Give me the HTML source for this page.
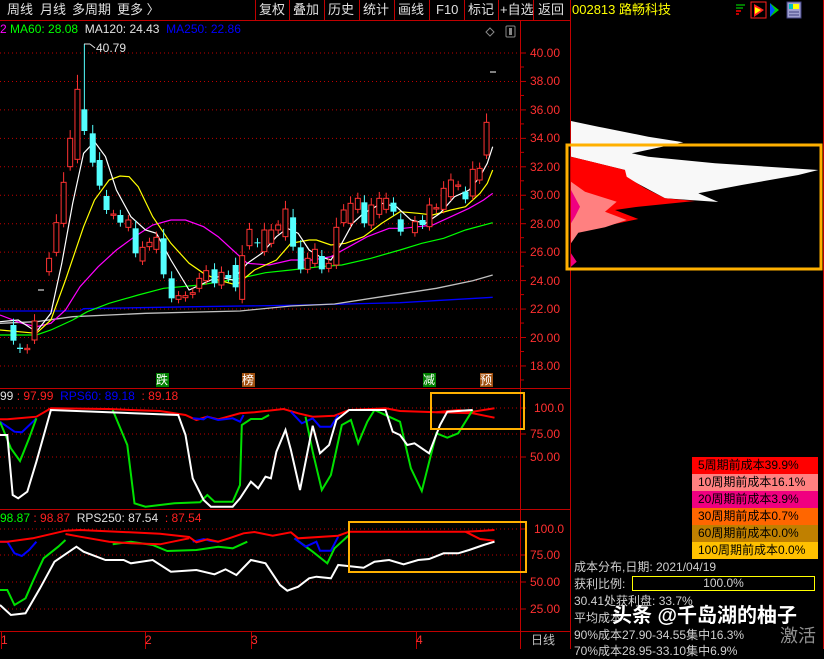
<!DOCTYPE html>
<html><head><meta charset="utf-8">
<style>
body{margin:0;background:#000;width:824px;height:649px;overflow:hidden;position:relative;font-family:"Liberation Sans","Noto Sans CJK SC",sans-serif;}
.t{position:absolute;white-space:nowrap;font-size:13px;line-height:16px;}
svg{position:absolute;left:0;top:0}
.leg div{height:17px;font-size:12px;line-height:17px;color:#000;padding-left:6px}
</style></head><body>
<svg id="s" width="824" height="649" viewBox="0 0 824 649"></svg>
<div class="t" style="left:7px;top:2px;color:#e0e0e0">周线</div>
<div class="t" style="left:40px;top:2px;color:#e0e0e0">月线</div>
<div class="t" style="left:72px;top:2px;color:#e0e0e0">多周期</div>
<div class="t" style="left:117px;top:2px;color:#e0e0e0">更多 〉</div>
<div class="t" style="left:259px;top:2px;color:#e0e0e0">复权</div>
<div class="t" style="left:293px;top:2px;color:#e0e0e0">叠加</div>
<div class="t" style="left:328px;top:2px;color:#e0e0e0">历史</div>
<div class="t" style="left:363px;top:2px;color:#e0e0e0">统计</div>
<div class="t" style="left:398px;top:2px;color:#e0e0e0">画线</div>
<div class="t" style="left:436px;top:2px;color:#e0e0e0">F10</div>
<div class="t" style="left:468px;top:2px;color:#e0e0e0">标记</div>
<div class="t" style="left:500px;top:2px;color:#e0e0e0">+自选</div>
<div class="t" style="left:538px;top:2px;color:#e0e0e0">返回</div>
<div class="t" style="left:572px;top:2px;color:#ffff00">002813 路畅科技</div>
<div class="t" style="left:0;top:21px;font-size:12px"><span style="color:#ff00ff">2</span> <span style="color:#00ff00">MA60: 28.08</span> <span style="color:#e0e0e0">&nbsp;MA120: 24.43</span> <span style="color:#0000ff">&nbsp;MA250: 22.86</span></div>
<div class="t" style="left:96px;top:40px;font-size:12px;color:#e0e0e0">40.79</div>
<div class="t" style="left:0;top:388px;font-size:12px"><span style="color:#e0e0e0">99</span> <span style="color:#ff2020">: 97.99</span> <span style="color:#0000ff">&nbsp;RPS60: 89.18</span> <span style="color:#ff2020">&nbsp;: 89.18</span></div>
<div class="t" style="left:0;top:510px;font-size:12px"><span style="color:#00ff00">98.87</span> <span style="color:#ff2020">: 98.87</span> <span style="color:#e0e0e0">&nbsp;RPS250: 87.54</span> <span style="color:#ff2020">&nbsp;: 87.54</span></div>
<div id="ax"></div>
<div class="t" style="left:156px;top:373px;width:13px;height:14px;background:#008000;color:#fff;font-size:12px;line-height:14px">跌</div>
<div class="t" style="left:242px;top:373px;width:13px;height:14px;background:#a05010;color:#fff;font-size:12px;line-height:14px">榜</div>
<div class="t" style="left:423px;top:373px;width:13px;height:14px;background:#008000;color:#fff;font-size:12px;line-height:14px">减</div>
<div class="t" style="left:480px;top:373px;width:13px;height:14px;background:#a05010;color:#fff;font-size:12px;line-height:14px">预</div>
<div class="t" style="left:1px;top:632px;color:#ff3030;font-size:12px">1</div>
<div class="t" style="left:145px;top:632px;color:#ff3030;font-size:12px">2</div>
<div class="t" style="left:251px;top:632px;color:#ff3030;font-size:12px">3</div>
<div class="t" style="left:416px;top:632px;color:#ff3030;font-size:12px">4</div>
<div class="t" style="left:531px;top:632px;color:#c0c0c0;font-size:12px">日线</div>
<div class="leg" style="position:absolute;left:692px;top:457px;width:126px">
<div style="background:#ff0000">5周期前成本39.9%</div>
<div style="background:#ff8080">10周期前成本16.1%</div>
<div style="background:#f00080">20周期前成本3.9%</div>
<div style="background:#ff6600">30周期前成本0.7%</div>
<div style="background:#c08000">60周期前成本0.0%</div>
<div style="background:#ffc000">100周期前成本0.0%</div>
</div>
<div class="t" style="left:574px;top:559px;color:#d0d0d0;font-size:12px">成本分布,日期: 2021/04/19</div>
<div class="t" style="left:574px;top:576px;color:#d0d0d0;font-size:12px">获利比例:</div>
<div class="t" style="left:632px;top:576px;width:181px;height:13px;border:1px solid #ffff00;color:#d0d0d0;font-size:12px;line-height:13px;text-align:center">100.0%</div>
<div class="t" style="left:574px;top:593px;color:#d0d0d0;font-size:12px">30.41处获利盘: 33.7%</div>
<div class="t" style="left:574px;top:610px;color:#d0d0d0;font-size:12px">平均成本</div>
<div class="t" style="left:612px;top:604px;color:#fff;font-size:20px;line-height:24px;font-weight:bold">头条 @千岛湖的柚子</div>
<div class="t" style="left:574px;top:627px;color:#d0d0d0;font-size:12px">90%成本27.90-34.55集中16.3%</div>
<div class="t" style="left:574px;top:643px;color:#d0d0d0;font-size:12px">70%成本28.95-33.10集中6.9%</div>
<div class="t" style="left:780px;top:625px;color:#909090;font-size:18px;line-height:22px">激活</div>
<script>
var S=document.getElementById('s'),h='';
function L(x1,y1,x2,y2,c,w,d){h+='<line x1="'+x1+'" y1="'+y1+'" x2="'+x2+'" y2="'+y2+'" stroke="'+c+'" stroke-width="'+(w||1)+'"'+(d?' stroke-dasharray="'+d+'"':'')+'/>';}
function P(pts,c,w,tr){var s=pts.map(function(p){return tr(p[0],p[1]).join(',')}).join(' ');h+='<polyline points="'+s+'" fill="none" stroke="'+c+'" stroke-width="'+(w||1)+'"/>';}
function M(x,y){return [(x/2.75).toFixed(1),(30+y/3).toFixed(1)];}
function R(x,y){return [(x/2.75).toFixed(1),(385+y/3).toFixed(1)];}
// frame
L(0,20.5,570,20.5,'#c00000');
[255,289,324,359,394,429,464,498,533].forEach(function(x){L(x+.5,0,x+.5,20,'#c00000')});
L(570.5,0,570.5,649,'#c00000');L(823.5,0,823.5,649,'#c00000');
L(520.5,20,520.5,649,'#c00000');
L(0,388.5,570,388.5,'#c00000');L(0,509.5,570,509.5,'#c00000');L(0,631.5,570,631.5,'#c00000');
[1,145,251,416].forEach(function(x){L(x+.5,631,x+.5,649,'#c00000')});
// main grid
var ax='';
for(var i=0;i<12;i++){var p=40-2*i,y=53+i*28.45;L(0,y,518,y,'#c00000',1,'1,3');L(520,y,526,y,'#c00000');ax+='<div class="t" style="left:530px;top:'+(y-8)+'px;color:#ff3030;font-size:12px">'+p.toFixed(2)+'</div>';L(520,y+14,524,y+14,'#c00000');}
[[408,'100.0'],[434,'75.00'],[457,'50.00'],[529,'100.0'],[555,'75.00'],[582,'50.00'],[609,'25.00']].forEach(function(a){if(a[1]!='100.0'||1){} L(0,a[0],518,a[0],'#c00000',1,'1,3');L(520,a[0],526,a[0],'#c00000');ax+='<div class="t" style="left:'+(a[1]=='100.0'?534:530)+'px;top:'+(a[0]-8)+'px;color:#ff3030;font-size:12px">'+a[1]+'</div>';});
document.getElementById('ax').innerHTML=ax;
// MAs
var T=M;
P([[0,843],[220,843],[230,836],[380,833],[540,830],[800,826],[1100,818],[1355,802]],'#0000ff',1.3,T);
P([[0,880],[100,875],[200,860],[400,850],[660,843],[800,828],[920,822],[1050,800],[1200,775],[1300,752],[1355,735]],'#c0c0c0',1.3,T);
P([[0,915],[100,915],[140,900],[200,870],[240,845],[300,820],[380,795],[450,775],[550,765],[660,745],[730,728],[800,720],[880,710],[940,705],[1020,685],[1100,660],[1160,640],[1220,625],[1280,600],[1355,578]],'#00ff00',1.2,T);
P([[0,855],[60,880],[100,890],[140,880],[180,840],[220,770],[270,710],[320,660],[370,620],[420,585],[470,570],[510,570],[560,590],[600,620],[640,660],[680,700],[740,705],[800,690],[860,690],[910,680],[960,650],[1010,620],[1070,595],[1110,595],[1150,590],[1190,585],[1240,560],[1290,535],[1330,510],[1355,490]],'#ff00ff',1.2,T);
P([[0,900],[100,910],[140,870],[180,750],[230,590],[260,510],[300,450],[330,438],[355,440],[380,470],[420,560],[470,640],[520,700],[560,730],[600,750],[650,765],[700,720],[760,690],[800,640],[850,630],[870,630],[910,645],[950,640],[1000,620],[1050,580],[1100,545],[1150,550],[1190,555],[1240,540],[1280,530],[1320,490],[1340,460],[1355,420]],'#ffff00',1.2,T);
P([[0,875],[50,870],[100,905],[140,850],[170,700],[200,520],[230,370],[260,335],[290,380],[320,480],[360,560],[400,600],[430,610],[470,690],[520,780],[560,760],[600,740],[640,750],[680,700],[720,670],[760,620],[790,595],[820,610],[850,660],[880,680],[910,690],[940,640],[970,580],[1000,550],[1050,520],[1090,530],[1130,570],[1170,580],[1210,550],[1250,500],[1290,480],[1320,440],[1340,400],[1355,350]],'#ffffff',1.2,T);
// candles [zx,top,bottom,color]
var C=[[37,885,932,'c'],[55,953,957,'c'],[75,955,959,'r'],[95,873,930,'r'],[135,685,725,'r'],[155,578,667,'r'],[175,457,580,'r'],[193,325,410,'r'],[213,178,388,'r'],[232,238,303,'c'],[255,310,398,'c'],[274,390,467,'c'],[293,498,540,'c'],[312,552,556,'r'],[331,555,578,'c'],[353,570,592,'r'],[373,595,670,'c'],[392,652,693,'r'],[411,637,650,'r'],[430,622,658,'r'],[450,625,733,'c'],[472,745,805,'c'],[491,797,808,'r'],[510,797,803,'r'],[530,788,793,'r'],[548,745,775,'r'],[567,722,752,'r'],[590,718,760,'c'],[609,727,765,'r'],[628,735,745,'c'],[648,705,772,'c'],[666,677,808,'r'],[686,598,647,'r'],[708,637,640,'c'],[727,600,665,'r'],[746,600,640,'r'],[765,585,600,'r'],[785,537,620,'r'],[806,562,650,'c'],[827,652,718,'c'],[846,685,718,'r'],[866,658,700,'r'],[885,678,718,'c'],[904,700,715,'r'],[925,592,705,'r'],[945,540,578,'r'],[964,520,580,'r'],[984,505,538,'r'],[1002,517,580,'c'],[1021,525,585,'r'],[1043,505,553,'r'],[1062,505,538,'r'],[1082,518,545,'c'],[1102,568,605,'c'],[1141,575,608,'r'],[1162,570,585,'c'],[1181,525,590,'r'],[1200,533,537,'r'],[1220,475,538,'r'],[1240,450,500,'r'],[1260,465,469,'r'],[1280,485,508,'c'],[1300,418,498,'r'],[1319,415,450,'r'],[1338,277,375,'r']];
C.forEach(function(c){var x=c[0]/2.75,t=30+c[1]/3,b=30+c[2]/3,col=c[3]=='r'?'#ff3232':'#54ffff';
var wt=t-4-(c[2]-c[1])/20,wb=b+4;if(c[0]==232)wt=44;
L(x,wt,x,wb,col);
if(c[3]=='r')h+='<rect x="'+(x-2.5)+'" y="'+t+'" width="5" height="'+Math.max(1,b-t)+'" fill="#000" stroke="'+col+'"/>';
else h+='<rect x="'+(x-3)+'" y="'+t+'" width="6" height="'+Math.max(1,b-t)+'" fill="'+col+'"/>';});
L(84,44,90,44,'#e0e0e0');L(90,44,95,48,'#e0e0e0');
L(490,72,496,72,'#fff');L(38,290,44,290,'#fff');
// diamond & icon
h+='<path d="M490 28 L494 32 L490 36 L486 32Z" fill="none" stroke="#888"/><rect x="506" y="26" width="9" height="11" fill="none" stroke="#888" rx="1"/><rect x="509" y="28" width="3" height="7" fill="#888"/>';
// RPS1
P([[0,103],[20,103],[100,95],[140,70],[300,72],[360,75],[440,78],[480,85],[510,90],[540,105],[570,95],[600,103],[620,97],[660,85],[700,82],[780,72],[820,85],[860,95],[920,92],[960,75],[1060,70],[1100,78],[1200,82],[1260,75],[1300,80],[1360,70]],'#ff0000',2,R);
P([[1200,82],[1300,85],[1360,98]],'#ff0000',2,R);
P([[0,110],[40,140],[60,142],[100,100]],'#0000ff',2,R);
P([[530,100],[560,103],[570,95],[600,105],[640,100],[660,110],[670,90]],'#0000ff',2,R);
P([[800,80],[830,115],[860,100],[880,125],[910,125],[930,90]],'#0000ff',2,R);
P([[0,110],[30,190],[55,228],[80,160],[100,100]],'#00e000',2,R);
P([[310,75],[350,180],[370,355],[400,365],[480,355],[550,352],[570,330],[590,350],[640,350],[660,300],[665,120],[690,102],[720,102],[740,90]],'#00e000',2,R);
P([[840,95],[860,200],[885,315],[910,270],[940,120],[965,105],[985,175],[1010,110],[1030,75],[1100,110],[1130,250],[1160,318],[1200,145],[1230,158],[1260,145],[1300,75]],'#00e000',2,R);
P([[0,150],[20,150],[35,330],[50,340],[75,320],[100,230],[140,75],[490,90],[510,150],[530,280],[560,345],[580,365],[640,365],[660,340],[690,290],[710,310],[730,275],[745,280],[760,200],[785,135],[800,195],[825,315],[860,122],[880,205],[905,180],[925,105],[960,75],[1060,75],[1080,140],[1100,150],[1120,180],[1140,175],[1180,205],[1210,120],[1230,80],[1300,75]],'#ffffff',2,R);
// RPS2
P([[0,615],[20,615],[40,660],[70,640],[90,590],[120,520],[160,485],[180,465]],'#00e000',2,R);
P([[310,478],[360,470],[420,480],[460,498],[540,495],[600,485],[640,490],[680,470]],'#00e000',2,R);
P([[810,460],[860,500],[900,535],[920,490],[960,450]],'#00e000',2,R);
P([[0,470],[20,470],[40,505],[60,513],[80,495],[100,470]],'#0000ff',2,R);
P([[530,470],[560,462],[580,468],[600,470]],'#0000ff',2,R);
P([[810,460],[840,485],[870,470],[880,497],[910,497],[930,455]],'#0000ff',2,R);
P([[0,470],[20,470],[90,460],[180,437],[220,435],[440,446],[520,456],[540,472],[570,463],[600,470],[630,460],[670,445],[700,441],[750,452],[800,442],[820,460],[930,452],[960,440],[1280,440],[1320,438],[1360,435]],'#ff0000',2,R);
P([[180,447],[220,455],[300,470],[360,475],[440,478],[520,460]],'#ff0000',2,R);
P([[1280,440],[1320,462],[1360,467]],'#ff0000',2,R);
P([[0,660],[30,690],[70,685],[110,610],[150,530],[210,485],[230,500],[290,525],[340,525],[360,535],[420,525],[470,560],[540,555],[590,568],[620,553],[650,570],[690,525],[730,535],[770,600],[790,617],[820,605],[850,580],[870,575],[910,580],[930,540],[1000,548],[1030,530],[1070,525],[1110,538],[1150,525],[1180,522],[1220,505],[1260,505],[1290,495],[1330,480],[1360,470]],'#ffffff',2,R);
// orange boxes
h+='<rect x="431" y="393" width="93" height="36" fill="none" stroke="#ffb000" stroke-width="2"/>';
h+='<rect x="349" y="522" width="177" height="50" fill="none" stroke="#ffb000" stroke-width="2"/>';
// distribution
function D(pts,col){h+='<polygon points="'+pts.map(function(p){return (565+p[0]/3).toFixed(1)+','+(110+p[1]/3).toFixed(1)}).join(' ')+'" fill="'+col+'"/>';}
D([[18,33],[100,50],[250,80],[355,97],[200,130],[250,140],[450,160],[760,180],[700,195],[530,225],[400,250],[460,276],[300,265],[180,200],[180,180],[18,140]],'#f8f8f8');
D([[18,140],[80,155],[180,180],[185,200],[240,235],[300,265],[390,273],[220,290],[150,300],[220,327],[160,340],[40,362],[18,380]],'#ff0000');
D([[18,215],[60,245],[155,275],[120,305],[185,330],[120,352],[40,368],[18,400]],'#ff8080');
D([[18,240],[45,290],[30,320],[18,340]],'#f00080');
D([[18,430],[35,455],[18,470]],'#f00080');
h+='<rect x="567" y="145" width="254" height="124" fill="none" stroke="#ffb000" stroke-width="3"/>';
// top icons
L(736,5,745,5,'#00a000',1.5);L(736,8,743,8,'#00a000',1.5);L(736,11,741,11,'#ff0000',1.5);L(736,14,739,14,'#ff0000',1.5);
h+='<rect x="751" y="2" width="15" height="16" fill="none" stroke="#ff2020"/><path d="M754 4 L764 10 L754 17Z" fill="#ff2020"/><path d="M755 7 L761 10 L755 14Z" fill="#ffff00"/>';
h+='<path d="M770 3 L779 10 L770 17 L773 10Z" fill="#00d000"/><path d="M770 3 L775 10 L770 17Z" fill="#0050ff"/>';
h+='<rect x="787" y="2" width="14" height="16" fill="#a0a0d0" stroke="#404080"/><rect x="789" y="4" width="10" height="5" fill="#ffff00"/><rect x="789" y="4" width="4" height="5" fill="#00c0c0"/><line x1="789" y1="12" x2="799" y2="12" stroke="#404080"/><line x1="789" y1="15" x2="799" y2="15" stroke="#404080"/>';
S.innerHTML=h;
</script>
</body></html>
